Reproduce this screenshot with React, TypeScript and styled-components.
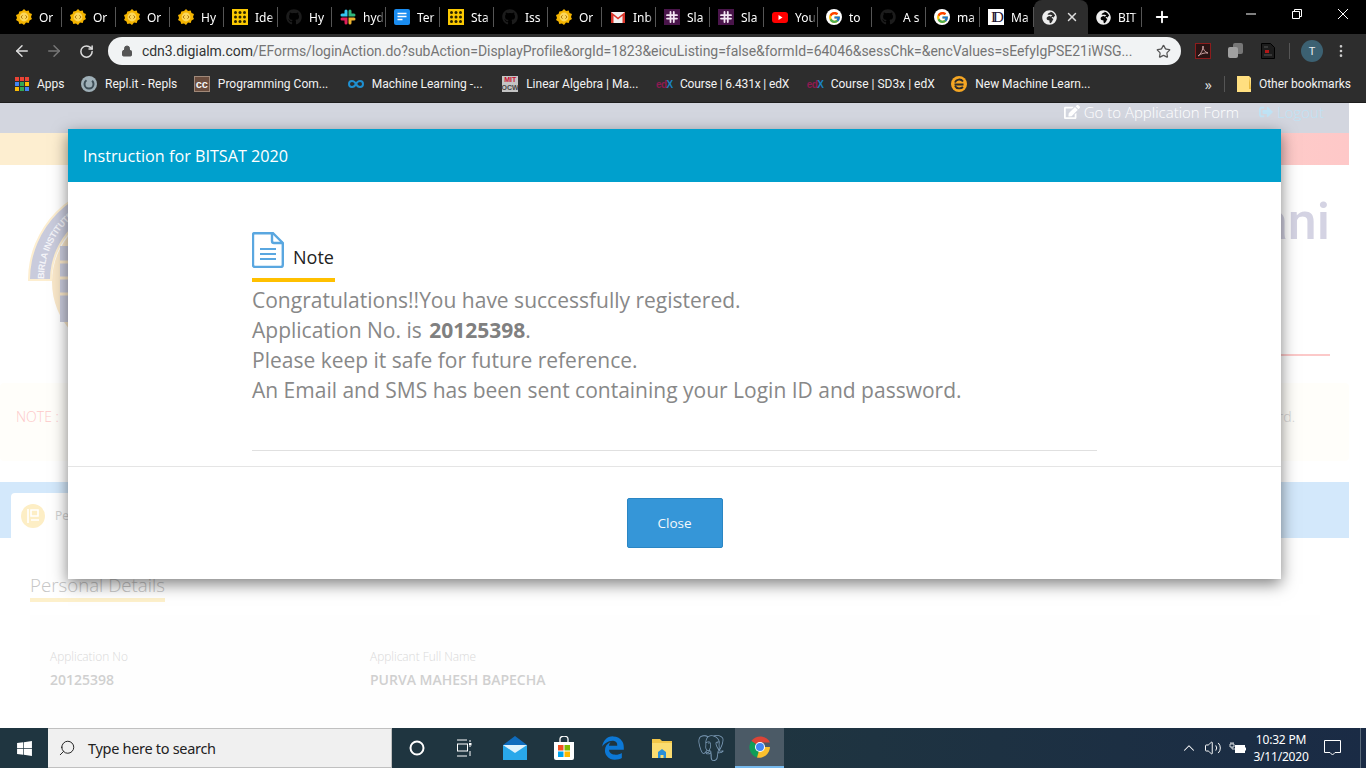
import React from 'react'
import styled, { createGlobalStyle } from 'styled-components'
import { ArrowLeft, ArrowRight, ChevronUp, Lock, MoreVertical, Plus, RotateCw, Search, Star, Volume2, X } from 'lucide-react'
import { FaEdit, FaGithub, FaGlobeAfrica, FaSignOutAlt, FaWindows } from 'react-icons/fa'
import { FaEdgeLegacy } from 'react-icons/fa6'
import { FcGoogle } from 'react-icons/fc'
import { SiPostgresql } from 'react-icons/si'

const GlobalStyle = createGlobalStyle`
  html, body {
    margin: 0;
    padding: 0;
    background: #fff;
    overflow: hidden;
  }
  * { box-sizing: border-box; }
`

const Screen = styled.div`
  width: 1366px;
  height: 768px;
  display: flex;
  flex-direction: column;
  font-family: 'Open Sans', sans-serif;
  overflow: hidden;
`

/* browser chrome */
const TabStrip = styled.div`
  height: 34px;
  background: #000;
  display: flex;
  align-items: center;
  padding-left: 8px;
`

const Tab = styled.div<{ $active?: boolean }>`
  width: 54px;
  height: 34px;
  padding-left: 8px;
  display: flex;
  align-items: center;
  gap: 7px;
  position: relative;
  background: ${p => (p.$active ? '#2d2d2d' : 'transparent')};
  border-radius: ${p => (p.$active ? '8px 8px 0 0' : '0')};
  &::after {
    content: '';
    display: ${p => (p.$active ? 'none' : 'block')};
    position: absolute;
    right: 0;
    top: 7px;
    height: 20px;
    width: 1px;
    background: #555;
  }
`

const TabLabel = styled.span`
  width: 22px;
  overflow: hidden;
  white-space: nowrap;
  color: #fff;
  font: 12px 'Noto Sans', sans-serif;
  -webkit-mask-image: linear-gradient(90deg, #000 65%, transparent);
  mask-image: linear-gradient(90deg, #000 65%, transparent);
`

const TabClose = styled.span`
  display: flex;
  margin-left: 1px;
  color: #ddd;
`

const NewTab = styled.span`
  display: flex;
  margin-left: 11px;
  color: #fff;
`

const WindowControls = styled.div`
  margin-left: auto;
  display: flex;
  align-self: flex-start;
`

const WindowButton = styled.div`
  width: 46px;
  height: 28px;
  display: flex;
  align-items: center;
  justify-content: center;
  color: #fff;
`

const Toolbar = styled.div`
  height: 34px;
  background: #2d2d2d;
  display: flex;
  align-items: center;
  padding-left: 6px;
`

const NavButton = styled.span<{ $dim?: boolean }>`
  width: 32px;
  display: flex;
  justify-content: center;
  color: ${p => (p.$dim ? '#777' : '#ddd')};
`

const Omnibox = styled.div`
  width: 1073px;
  height: 28px;
  margin-left: 6px;
  background: #f1f3f4;
  border-radius: 14px;
  display: flex;
  align-items: center;
  padding: 0 10px 0 13px;
  font: 14px Roboto, sans-serif;
  color: #757575;
  letter-spacing: -0.05px;
  white-space: nowrap;
  & > svg { flex: none; }
`

const UrlHost = styled.span`
  color: #333;
  margin-left: 9px;
`

const OmniStar = styled.span`
  margin-left: auto;
  display: flex;
  color: #555;
`

const Extensions = styled.div`
  display: flex;
  align-items: center;
  padding-left: 14px;
`

const ExtSlot = styled.span<{ $w: number }>`
  width: ${p => p.$w}px;
  display: flex;
  align-items: center;
`

const ToolDivider = styled.span`
  width: 1px;
  height: 16px;
  background: #555;
  margin-right: 11px;
`

const Avatar = styled.span`
  width: 22px;
  height: 22px;
  border-radius: 50%;
  background: #3c6172;
  color: #e8eef0;
  font: 11px Roboto, sans-serif;
  display: flex;
  align-items: center;
  justify-content: center;
  margin-right: 10px;
`

const BookmarkBar = styled.div`
  height: 35px;
  background: #2d2d2d;
  border-bottom: 1px solid #1e1e1e;
  display: flex;
  align-items: center;
  padding: 0 15px 2px 15px;
  gap: 16.5px;
`

const Bookmark = styled.span<{ $extra?: number; $tight?: boolean }>`
  display: flex;
  align-items: center;
  gap: 8px;
  margin-left: ${p => p.$extra ?? 0}px;
  color: #f2f2f2;
  font: 12px Roboto, sans-serif;
  letter-spacing: ${p => (p.$tight ? '-0.15px' : '0')};
  white-space: nowrap;
`

const MoreBookmarks = styled.span`
  margin-left: auto;
  margin-right: -4px;
  color: #ddd;
  font: 14px 'Noto Sans', sans-serif;
`

const BookmarkDivider = styled.span`
  width: 1px;
  height: 16px;
  margin-right: -5px;
  background: #555;
`

const TinyBadge = styled.span<{ $bg: string; $color: string }>`
  width: 16px;
  height: 16px;
  background: ${p => p.$bg};
  color: ${p => p.$color};
  font: bold 7px 'Liberation Sans', sans-serif;
  display: flex;
  flex-direction: column;
  align-items: center;
  justify-content: center;
  line-height: 8px;
`

const CcBadge = styled(TinyBadge)`
  font-size: 11px;
  border: 1px solid #a08878;
`

const MitRed = styled.span`
  color: #c8102e;
`

const EdxMark = styled.span`
  width: 16px;
  font: bold 10px 'Liberation Sans', sans-serif;
  color: #8e1a50;
  letter-spacing: -0.5px;
  & b { color: #1b82c4; }
`

const SerifFav = styled.span`
  width: 16px;
  height: 16px;
  background: #fff;
  color: #1c1030;
  font: 15px 'Liberation Serif', serif;
  line-height: 16px;
  letter-spacing: -3px;
  text-align: center;
  flex: none;
`

const GoogleFav = styled.span`
  width: 16px;
  height: 16px;
  border-radius: 50%;
  background: #fff;
  display: flex;
  align-items: center;
  justify-content: center;
  flex: none;
`

/* washed-out page under the dialog */
const Page = styled.div`
  flex: 1;
  position: relative;
  overflow: hidden;
  background: #fff;
`

const PageColumn = styled.div`
  width: 1349px;
`

const TopBar = styled.div`
  height: 30px;
  background: #d3d6df;
  display: flex;
  align-items: center;
  justify-content: flex-end;
  gap: 20px;
  padding: 0 25px 12px 0;
  font-size: 15px;
  font-weight: 300;
`

const TopLink = styled.span<{ $color: string }>`
  display: flex;
  align-items: center;
  gap: 4px;
  color: ${p => p.$color};
`

const Strip = styled.div`
  height: 32px;
  background: linear-gradient(90deg, #fdeed0 0%, #fdeed0 30%, #fec8c8 100%);
`

const Header = styled.div`
  height: 218px;
  padding: 30px 19px 0 28px;
`

const HeaderRow = styled.div`
  height: 159px;
  display: flex;
  justify-content: space-between;
`

const SiteTitle = styled.div`
  margin-top: -3px;
  font-family: Roboto, sans-serif;
  font-size: 52px;
  font-weight: 500;
  line-height: 60px;
  color: #d4d3e3;
  white-space: nowrap;
`

const HeaderRule = styled.div`
  height: 2px;
  margin-left: 300px;
  background: #fcc9c9;
`

const NoteBox = styled.div`
  height: 78px;
  background: #fffefa;
  border-radius: 4px;
  display: flex;
  justify-content: space-between;
  padding: 24px 54px 0 16px;
  font-size: 14px;
  font-weight: 300;
`

const NoteLabel = styled.span<{ $color: string }>`
  color: ${p => p.$color};
`

const TabBand = styled.div`
  height: 56px;
  margin-top: 21px;
  background: #d3e8fb;
  padding: 11px 0 0 11px;
  display: flex;
`

const PageTab = styled.div`
  width: 220px;
  background: #fff;
  border-radius: 4px 0 0 0;
  display: flex;
  align-items: center;
  gap: 10px;
  padding-left: 10px;
  color: #d0d0d0;
  font-size: 12px;
`

const TabBullet = styled.span`
  width: 24px;
  height: 24px;
  border-radius: 50%;
  background: #fdeec5;
  display: flex;
  align-items: center;
  justify-content: center;
`

const SectionTitle = styled.div`
  display: inline-block;
  margin: 34px 0 0 30px;
  border-bottom: 4px solid #fdf0cb;
  font-size: 18.7px;
  font-weight: 300;
  line-height: 26px;
  color: #c6c6c6;
`

const DetailPanel = styled.div`
  margin: 13px 29px 0 30px;
  height: 113px;
  background: #fefefe;
  padding: 33px 20px 0;
  display: flex;
`

const DetailField = styled.div`
  width: 320px;
`

const FieldLabel = styled.div`
  font-size: 11.9px;
  font-weight: 300;
  line-height: 16px;
  color: #d9d9d9;
`

const FieldValue = styled.div`
  margin-top: 6px;
  font-size: 14px;
  font-weight: 600;
  line-height: 20px;
  color: #d0d0d0;
  white-space: nowrap;
`

/* dialog */
const Dialog = styled.div`
  position: absolute;
  left: 68px;
  top: 26px;
  width: 1213px;
  height: 450px;
  background: #fff;
  box-shadow: 0 5px 15px rgba(0, 0, 0, 0.5);
  display: flex;
  flex-direction: column;
`

const DialogHead = styled.div`
  height: 53px;
  background: #00a0cd;
  color: #fff;
  font-size: 16.2px;
  display: flex;
  align-items: center;
  padding-left: 15px;
  flex: none;
`

const DialogBody = styled.div`
  height: 285px;
  padding: 50px 184px 0 184px;
  border-bottom: 1px solid #e5e5e5;
  flex: none;
`

const NoteHead = styled.div`
  width: 83px;
  height: 50px;
  border-bottom: 4px solid #ffc000;
  display: flex;
  align-items: flex-start;
  gap: 9px;
`

const NoteTitle = styled.span`
  margin-top: 13px;
  font-size: 18px;
  font-weight: 500;
  line-height: 24px;
  color: #222;
`

const Message = styled.div`
  height: 169px;
  border-bottom: 1px solid #e0e0e0;
  padding-top: 3px;
  font-size: 21px;
  line-height: 30px;
  color: #888;
  & b { font-weight: 700; color: #808080; margin-left: 2px; }
`

const DialogFoot = styled.div`
  flex: 1;
  display: flex;
  justify-content: center;
  padding-top: 31px;
`

const CloseButton = styled.button`
  width: 96px;
  height: 50px;
  background: #3596d8;
  border: 1px solid #2a86c4;
  border-radius: 2px;
  color: #f4f8fb;
  font: 13.5px 'Open Sans', sans-serif;
`

/* taskbar */
const Taskbar = styled.div`
  height: 40px;
  background: linear-gradient(90deg, #1f3540 0%, #1f3540 55%, #1a2b45 100%);
  display: flex;
  align-items: stretch;
  color: #fff;
  flex: none;
`

const StartButton = styled.div`
  width: 48px;
  display: flex;
  align-items: center;
  justify-content: center;
`

const SearchBox = styled.div`
  width: 344px;
  background: #f0f0f0;
  border: 1px solid #c0c0c0;
  border-width: 1px 1px 1px 0;
  display: flex;
  align-items: center;
  gap: 12px;
  padding-left: 10px;
  color: #222;
  font: 14.5px 'Noto Sans', sans-serif;
  letter-spacing: -0.3px;
`

const TaskCell = styled.div<{ $active?: boolean }>`
  width: 49px;
  display: flex;
  align-items: center;
  justify-content: center;
  background: ${p => (p.$active ? '#4b5a66' : 'transparent')};
  border-bottom: ${p => (p.$active ? '2px solid #76b9ed' : '0')};
`

const Tray = styled.div`
  margin-left: auto;
  display: flex;
  align-items: center;
  padding-right: 5px;
`

const TrayIcon = styled.span`
  width: 24px;
  display: flex;
  justify-content: center;
`

const Clock = styled.div`
  width: 64px;
  text-align: center;
  font: 12px/17px 'Noto Sans', sans-serif;
  letter-spacing: -0.2px;
`

const NotifySlot = styled.span`
  width: 48px;
  height: 40px;
  display: flex;
  justify-content: center;
  align-items: center;
  padding-right: 8px;
  border-right: 1px solid #5a6a7a;
`

type FavKind = 'sun' | 'grid' | 'git' | 'slack' | 'docs' | 'gmail' | 'slackp' | 'yt' | 'google' | 'md' | 'globe'

const Fav = ({ kind }: { kind: FavKind }) => {
  if (kind === 'git') return <FaGithub size={16} color="#1c1c1c" style={{ flex: 'none' }} />
  if (kind === 'globe') return <FaGlobeAfrica size={15} color="#eee" style={{ flex: 'none' }} />
  if (kind === 'md') return <SerifFav>ID</SerifFav>
  if (kind === 'google') return <GoogleFav><FcGoogle size={13} /></GoogleFav>
  return (
    <svg width="16" height="16" viewBox="0 0 16 16" style={{ flex: 'none' }}>
      {kind === 'sun' && (
        <>
          <path d="M8 0l2 2 2.700-.6.8 2.700 2.500 1-1 2.900 1 2-2.500 1.400-.8 2.600-2.700-.6L8 16l-2-1.600-2.700.6-.8-2.600L0 11l1-2-1-2.900 2.500-1 .8-2.700L6 2z" fill="#f4b400" />
          <circle cx="8" cy="8" r="4.400" fill="#fbd75b" />
          <path d="M6.500 6.300L5 8l1.500 1.700M9.500 6.300L11 8 9.500 9.700" fill="none" stroke="#a56a00" strokeWidth=".9" />
        </>
      )}
      {kind === 'grid' && (
        <>
          <rect width="16" height="16" fill="#fbc902" />
          {[2, 6.5, 11].map(y => [2, 6.5, 11].map(x => <rect key={`${x}-${y}`} x={x} y={y} width="3" height="3" rx="1.500" fill="#2a2300" />))}
        </>
      )}
      {kind === 'slack' && (
        <g strokeWidth="3" strokeLinecap="round">
          <path d="M6 2v4H2" fill="none" stroke="#36c5f0" />
          <path d="M14 6h-4V2" fill="none" stroke="#2eb67d" />
          <path d="M10 14v-4h4" fill="none" stroke="#ecb22e" />
          <path d="M2 10h4v4" fill="none" stroke="#e01e5a" />
        </g>
      )}
      {kind === 'docs' && (
        <>
          <rect width="16" height="16" rx="2" fill="#1a8cf0" />
          <path d="M3.500 4.500h9M3.500 7.500h9M3.500 10.500h5" stroke="#fff" strokeWidth="1.500" />
        </>
      )}
      {kind === 'gmail' && (
        <>
          <rect x="1" y="3" width="14" height="11" fill="#f1f1f1" />
          <path d="M1 14V3l7 5.500L15 3v11h-2.500V6.800L8 10.500 3.500 6.800V14z" fill="#d9352a" />
        </>
      )}
      {kind === 'slackp' && (
        <>
          <rect width="16" height="16" fill="#4a154b" />
          <path d="M6.500 3v10M9.800 3v10M3 6.200h10M3 9.600h10" stroke="#f3e6f3" strokeWidth="1.800" strokeLinecap="round" />
        </>
      )}
      {kind === 'yt' && (
        <>
          <rect y="3" width="16" height="11" rx="3" fill="#f00" />
          <path d="M6.500 6v5l4-2.500z" fill="#fff" />
        </>
      )}
    </svg>
  )
}

const tabs: [FavKind, string][] = [
  ['sun', 'Or'], ['sun', 'Or'], ['sun', 'Or'], ['sun', 'Hy'], ['grid', 'Ide'], ['git', 'Hy'], ['slack', 'hyd'],
  ['docs', 'Ter'], ['grid', 'Sta'], ['git', 'Iss'], ['sun', 'Or'], ['gmail', 'Inb'], ['slackp', 'Sla'], ['slackp', 'Sla'],
  ['yt', 'You'], ['google', 'to'], ['git', 'A s'], ['google', 'ma'], ['md', 'Ma'],
]

const AppsIcon = () => {
  const colors = ['#ea4335', '#ea4335', '#ea4335', '#4285f4', '#34a853', '#fbbc05', '#fbbc05', '#34a853', '#4285f4']
  return (
    <svg width="14" height="14" viewBox="0 0 14 14">
      {colors.map((c, i) => <rect key={i} x={(i % 3) * 5} y={Math.floor(i / 3) * 5} width="4" height="4" fill={c} />)}
    </svg>
  )
}

const ReplIcon = () => (
  <svg width="16" height="16" viewBox="0 0 16 16">
    <circle cx="8" cy="8" r="8" fill="#9fb0b8" />
    <circle cx="8" cy="8" r="4.500" fill="none" stroke="#3f4f58" strokeWidth="2" strokeDasharray="18 6" />
  </svg>
)

const LoopIcon = () => (
  <svg width="16" height="16" viewBox="0 0 16 16">
    <path d="M8 8c-1-2-2-3-4-3a3 3 0 000 6c2 0 3-1 4-3s2-3 4-3a3 3 0 010 6c-2 0-3-1-4-3z" fill="none" stroke="#1f8fd0" strokeWidth="2" />
  </svg>
)

const OrangeE = () => (
  <svg width="16" height="16" viewBox="0 0 16 16">
    <circle cx="8" cy="8" r="8" fill="#f5a623" />
    <path d="M3.500 8.500h9M12 5.500A4.500 4.500 0 004 6.500M4 10c1.500 3 6 3 8 1" fill="none" stroke="#2d2d2d" strokeWidth="1.800" />
  </svg>
)

const FolderFav = () => (
  <svg width="14" height="16" viewBox="0 0 14 16">
    <path d="M0 0h12l2 2v14H0z" fill="#ffdf80" />
    <path d="M12 0v13h2z" fill="#e8b93e" />
  </svg>
)

const PdfIcon = () => (
  <svg width="16" height="16" viewBox="0 0 16 16">
    <rect x=".5" y=".5" width="15" height="15" fill="#2a1414" stroke="#8c1c1c" />
    <path d="M3 13c3-2 5-6 5-10 0 4 2 6 5 7-3-.5-7 .5-10 3z" fill="none" stroke="#c9a0a0" strokeWidth="1" />
  </svg>
)

const CopyExt = () => (
  <svg width="16" height="16" viewBox="0 0 16 16">
    <rect x="5" y="0" width="10" height="11" rx="2" fill="#777" />
    <rect x="0" y="4" width="10" height="11" rx="2" fill="#a0a0a0" />
  </svg>
)

const DocExt = () => (
  <svg width="14" height="16" viewBox="0 0 14 16">
    <path d="M.5.5h9l4 4v11H.5z" fill="#1c1c1c" stroke="#000" />
    <rect x="4" y="7" width="4" height="3" fill="#b01818" />
    <path d="M3 4h4M3 12h8" stroke="#555" />
  </svg>
)

const NoteIcon = () => (
  <svg width="32" height="36" viewBox="0 0 32 36" style={{ flex: 'none' }}>
    <path d="M3 1.200h18l9.800 9.800v22a2 2 0 01-2 2H3a2 2 0 01-2-2V3a2 2 0 012-2z" fill="none" stroke="#5aa7e0" strokeWidth="2.400" />
    <path d="M20 1v8a2 2 0 002 2h9" fill="none" stroke="#5aa7e0" strokeWidth="2.400" />
    <path d="M8 17h16M8 22h16M8 27h16" stroke="#5aa7e0" strokeWidth="2.200" />
  </svg>
)

const CollegeLogo = () => (
  <svg width="100" height="140" viewBox="28 195 100 140" style={{ flex: 'none' }}>
    <defs>
      <path id="ribbon" d="M44 279A81 81 0 01125 198" />
    </defs>
    <path d="M28 281A97 97 0 01125 183L125 207A73 73 0 0052 281z" fill="#fdeed0" />
    <path d="M30 279A95 95 0 01125 185L125 205A75 75 0 0050 279z" fill="#c9cbdc" />
    <text fontFamily="'Liberation Sans', sans-serif" fontSize="9" fontWeight="700" fill="#f4f4f8" letterSpacing="-0.3">
      <textPath href="#ribbon">BIRLA INSTITUTE</textPath>
    </text>
    <circle cx="125" cy="282" r="73" fill="#f9e7c9" />
    <path d="M60 246h20v76H60z" fill="#c9cbdc" />
    <path d="M60 262h20M60 278h20M60 294h20" stroke="#f9e7c9" strokeWidth="3" />
  </svg>
)

const TabBulletIcon = () => (
  <svg width="12" height="14" viewBox="0 0 12 14">
    <path d="M1 0v14M4 1h7v6H4zM4 11h8" fill="none" stroke="#fff" strokeWidth="1.600" />
  </svg>
)

const TaskView = () => (
  <svg width="18" height="18" viewBox="0 0 18 18" fill="none" stroke="#fff" strokeWidth="1">
    <path d="M0 1h10M0 17h10M13 1v2M13 7v1M13 12v5" />
    <rect x="0.500" y="5" width="10" height="7" />
    <rect x="12.500" y="4.500" width="1.500" height="1.500" fill="#fff" />
  </svg>
)

const MailTile = () => (
  <svg width="24" height="24" viewBox="0 0 24 24">
    <path d="M12 0l12 9v15H0V9z" fill="#0f6cbd" />
    <path d="M0 9h24v15H0z" fill="#29a8ea" />
    <path d="M0 9l12 8 12-8" fill="#dff2fc" />
  </svg>
)

const StoreBag = () => (
  <svg width="24" height="24" viewBox="0 0 24 24">
    <path d="M2 6h20v16a2 2 0 01-2 2H4a2 2 0 01-2-2z" fill="#fff" />
    <path d="M8 6V3a4 3 0 018 0v3" fill="none" stroke="#fff" strokeWidth="1.300" />
    <rect x="6" y="9" width="5.500" height="5.500" fill="#f25022" />
    <rect x="12.500" y="9" width="5.500" height="5.500" fill="#7fba00" />
    <rect x="6" y="15.500" width="5.500" height="5.500" fill="#00a4ef" />
    <rect x="12.500" y="15.500" width="5.500" height="5.500" fill="#ffb900" />
  </svg>
)

const FolderTile = () => (
  <svg width="22" height="22" viewBox="0 0 22 22">
    <path d="M1 2h8l2 2h10v17H1z" fill="#f2c648" />
    <path d="M1 6h20v15H1z" fill="#fbdc70" />
    <path d="M7 21v-6l4-3 4 3v6h-2.500v-3h-3v3z" fill="#2a8fd8" />
  </svg>
)

const ChromeTile = () => (
  <svg width="24" height="24" viewBox="0 0 24 24">
    <path d="M12 12L3.300 6A11 11 0 0122 7.500H12z" fill="#db4437" />
    <path d="M12 12L3.300 6A11 11 0 009 22.600L14 12z" fill="#0f9d58" />
    <path d="M12 12H22A11 11 0 019 22.600z" fill="#fbc02d" />
    <circle cx="12" cy="12" r="5" fill="#fff" />
    <circle cx="12" cy="12" r="4" fill="#4285f4" />
  </svg>
)

const BatteryPlug = () => (
  <svg width="17" height="12" viewBox="0 0 17 12" fill="#fff">
    <path d="M1 2h4v3H1zM2 0v2M4 0v2M3 5v2h3" stroke="#fff" strokeWidth=".8" fill="none" />
    <rect x="6.500" y="3.500" width="9" height="7" fill="#fff" stroke="#fff" />
    <rect x="15.800" y="5.500" width="1.200" height="3" />
  </svg>
)

const NotifyIcon = () => (
  <svg width="17" height="16" viewBox="0 0 17 16" fill="none" stroke="#fff" strokeWidth="1">
    <path d="M.5.500h16v12h-5.500l-2.500 2.500-2.500-2.500H.5z" />
  </svg>
)

export default function App() {
  return (
    <>
      <GlobalStyle />
      <Screen>
        <TabStrip>
          {tabs.map(([kind, label], i) => (
            <Tab key={i}>
              <Fav kind={kind} />
              <TabLabel>{label}</TabLabel>
            </Tab>
          ))}
          <Tab $active>
            <Fav kind="globe" />
            <TabClose><X size={14} strokeWidth={2.5} /></TabClose>
          </Tab>
          <Tab>
            <Fav kind="globe" />
            <TabLabel>BIT</TabLabel>
          </Tab>
          <NewTab><Plus size={18} strokeWidth={2.5} /></NewTab>
          <WindowControls>
            <WindowButton>
              <svg width="10" height="10" viewBox="0 0 10 10"><path d="M0 5h10" stroke="#fff" /></svg>
            </WindowButton>
            <WindowButton>
              <svg width="10" height="10" viewBox="0 0 10 10" fill="none" stroke="#fff"><path d="M.5 2.500h7v7h-7zM2.500 2.500v-2h7v7h-2" /></svg>
            </WindowButton>
            <WindowButton>
              <svg width="10" height="10" viewBox="0 0 10 10"><path d="M0 0l10 10M10 0L0 10" stroke="#fff" /></svg>
            </WindowButton>
          </WindowControls>
        </TabStrip>

        <Toolbar>
          <NavButton><ArrowLeft size={18} strokeWidth={2} /></NavButton>
          <NavButton $dim><ArrowRight size={18} strokeWidth={2} /></NavButton>
          <NavButton><RotateCw size={15} strokeWidth={2.4} /></NavButton>
          <Omnibox>
            <Lock size={12} color="#555" fill="#555" />
            <UrlHost>cdn3.digialm.com</UrlHost>
            /EForms/loginAction.do?subAction=DisplayProfile&orgId=1823&eicuListing=false&formId=64046&sessChk=&encValues=sEefyIgPSE21iWSG...
            <OmniStar><Star size={15} strokeWidth={2} /></OmniStar>
          </Omnibox>
          <Extensions>
            <ExtSlot $w={33}><PdfIcon /></ExtSlot>
            <ExtSlot $w={33}><CopyExt /></ExtSlot>
            <ExtSlot $w={28}><DocExt /></ExtSlot>
            <ToolDivider />
            <Avatar>T</Avatar>
            <MoreVertical size={16} color="#ccc" />
          </Extensions>
        </Toolbar>

        <BookmarkBar>
          <Bookmark><AppsIcon />Apps</Bookmark>
          <Bookmark><ReplIcon />Repl.it - Repls</Bookmark>
          <Bookmark><CcBadge $bg="#6b4d3e" $color="#f3f3f3">cc</CcBadge>Programming Com...</Bookmark>
          <Bookmark $extra={3}><LoopIcon />Machine Learning -...</Bookmark>
          <Bookmark $extra={3}><TinyBadge $bg="#c4c4c4" $color="#444"><MitRed>MIT</MitRed>OCW</TinyBadge>Linear Algebra | Ma...</Bookmark>
          <Bookmark $extra={1} $tight><EdxMark>ed<b>X</b></EdxMark>Course | 6.431x | edX</Bookmark>
          <Bookmark $extra={1}><EdxMark>ed<b>X</b></EdxMark>Course | SD3x | edX</Bookmark>
          <Bookmark><OrangeE />New Machine Learn...</Bookmark>
          <MoreBookmarks>»</MoreBookmarks>
          <BookmarkDivider />
          <Bookmark><FolderFav />Other bookmarks</Bookmark>
        </BookmarkBar>

        <Page>
          <PageColumn>
            <TopBar>
              <TopLink $color="#fff"><FaEdit size={16} />Go to Application Form</TopLink>
              <TopLink $color="#bfe3f5"><FaSignOutAlt size={14} />Logout</TopLink>
            </TopBar>
            <Strip />
            <Header>
              <HeaderRow>
                <CollegeLogo />
                <SiteTitle>Pilani</SiteTitle>
              </HeaderRow>
              <HeaderRule />
            </Header>
            <NoteBox>
              <NoteLabel $color="#fdc9c9">NOTE :</NoteLabel>
              <NoteLabel $color="#d5d5d5">password.</NoteLabel>
            </NoteBox>
            <TabBand>
              <PageTab>
                <TabBullet><TabBulletIcon /></TabBullet>
                Personal Details
              </PageTab>
            </TabBand>
            <SectionTitle>Personal Details</SectionTitle>
            <DetailPanel>
              <DetailField>
                <FieldLabel>Application No</FieldLabel>
                <FieldValue>20125398</FieldValue>
              </DetailField>
              <DetailField>
                <FieldLabel>Applicant Full Name</FieldLabel>
                <FieldValue>PURVA MAHESH BAPECHA</FieldValue>
              </DetailField>
            </DetailPanel>
          </PageColumn>

          <Dialog>
            <DialogHead>Instruction for BITSAT 2020</DialogHead>
            <DialogBody>
              <NoteHead>
                <NoteIcon />
                <NoteTitle>Note</NoteTitle>
              </NoteHead>
              <Message>
                Congratulations!!You have successfully registered.<br />
                Application No. is <b>20125398</b>.<br />
                Please keep it safe for future reference.<br />
                An Email and SMS has been sent containing your Login ID and password.
              </Message>
            </DialogBody>
            <DialogFoot>
              <CloseButton>Close</CloseButton>
            </DialogFoot>
          </Dialog>
        </Page>

        <Taskbar>
          <StartButton><FaWindows size={17} /></StartButton>
          <SearchBox>
            <Search size={18} strokeWidth={1.3} style={{ transform: 'scaleX(-1)' }} />
            Type here to search
          </SearchBox>
          <TaskCell>
            <svg width="16" height="16" viewBox="0 0 16 16"><circle cx="8" cy="8" r="6.500" fill="none" stroke="#fff" strokeWidth="2" /></svg>
          </TaskCell>
          <TaskCell><TaskView /></TaskCell>
          <TaskCell><MailTile /></TaskCell>
          <TaskCell><StoreBag /></TaskCell>
          <TaskCell><FaEdgeLegacy size={24} color="#0c78d6" /></TaskCell>
          <TaskCell><FolderTile /></TaskCell>
          <TaskCell><SiPostgresql size={26} color="#7d9cb8" /></TaskCell>
          <TaskCell $active><ChromeTile /></TaskCell>
          <Tray>
            <TrayIcon><ChevronUp size={18} strokeWidth={1.4} /></TrayIcon>
            <TrayIcon><Volume2 size={18} strokeWidth={1.3} /></TrayIcon>
            <TrayIcon><BatteryPlug /></TrayIcon>
            <Clock>10:32 PM<br />3/11/2020</Clock>
            <NotifySlot><NotifyIcon /></NotifySlot>
          </Tray>
        </Taskbar>
      </Screen>
    </>
  )
}
